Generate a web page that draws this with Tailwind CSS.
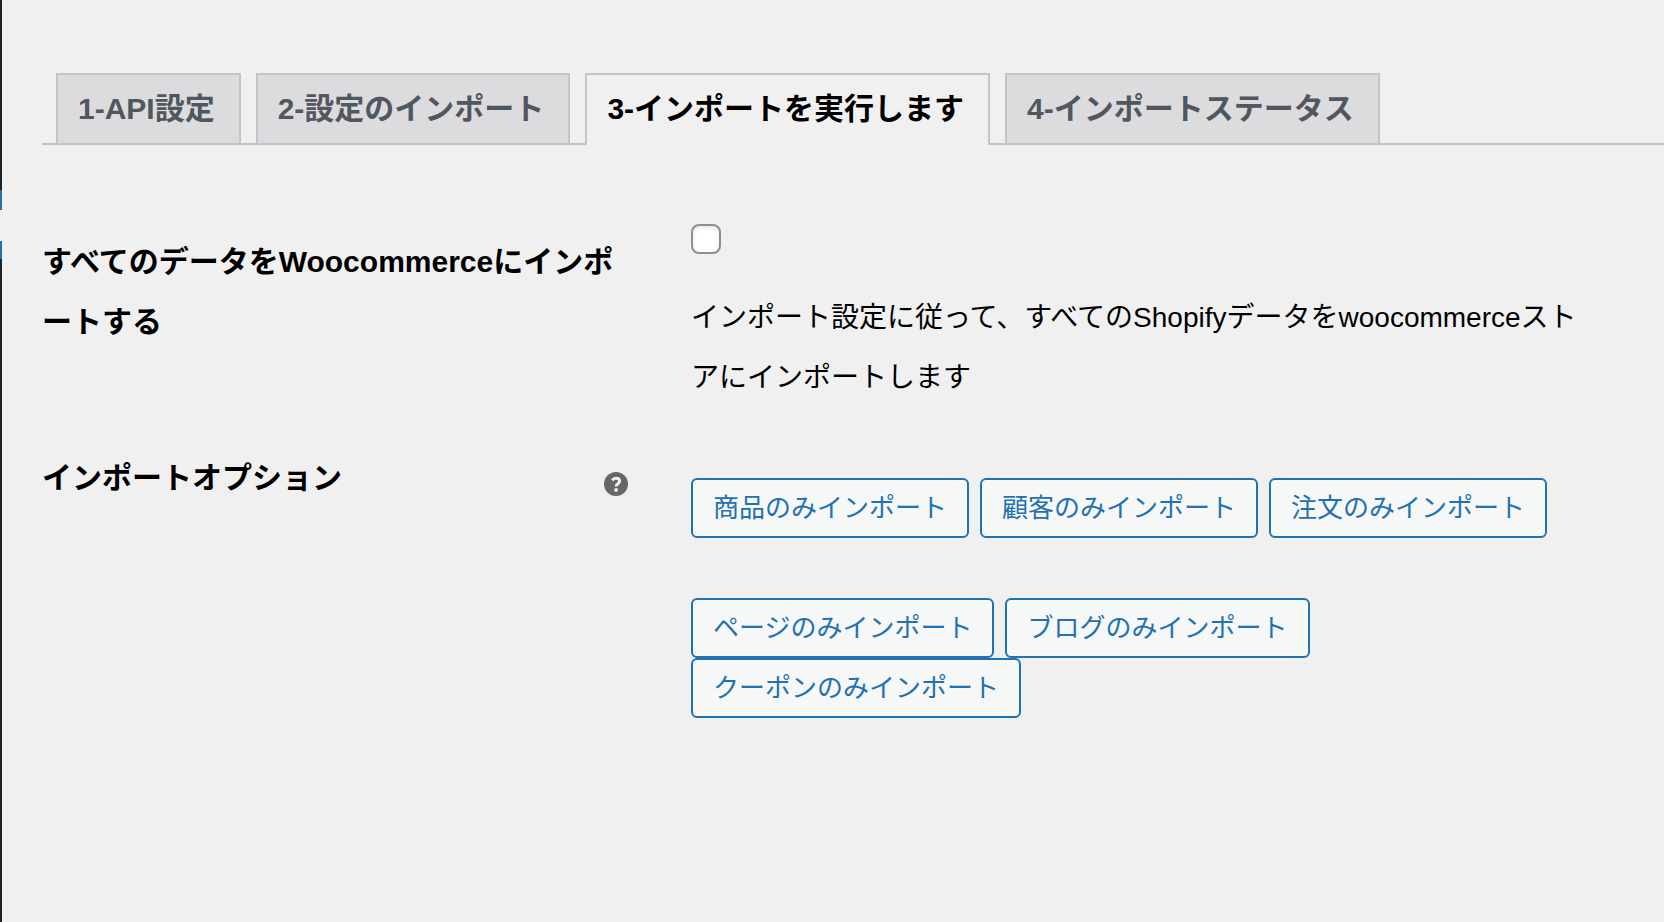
<!DOCTYPE html>
<html lang="ja">
<head>
  <meta charset="UTF-8" />
  <meta name="viewport" content="width=device-width, initial-scale=1.0" />
  <title>インポートを実行します</title>
  <script src="https://cdn.jsdelivr.net/npm/@tailwindcss/browser@4"></script>
</head>
<body class="flex min-h-screen bg-[#f0f0f0] text-black font-['Liberation_Sans','Noto_Sans_CJK_JP',sans-serif]">
  <!-- Edge of the admin menu -->
  <aside class="w-[2px] shrink-0 flex flex-col bg-[#1d2327]">
    <div class="mt-[190px] h-5 bg-[#2271b1]"></div>
    <div class="h-[31px] bg-[#f0f0f0]"></div>
    <div class="h-[18px] bg-[#2271b1]"></div>
  </aside>

  <main class="flex-1 min-w-0 pt-[73px] pl-10">
    <!-- Tabs -->
    <nav class="flex gap-[15px] pl-[14px] border-b-2 border-[#c3c4c7] text-[30px] leading-[68px] font-bold text-[#50575e] whitespace-nowrap">
      <a href="#api" class="pl-5 pr-6 border-2 border-b-0 border-[#c3c4c7] bg-[#dcdcde]">1-API設定</a>
      <a href="#settings" class="pl-5 pr-6 border-2 border-b-0 border-[#c3c4c7] bg-[#dcdcde]">2-設定のインポート</a>
      <a href="#import" aria-current="page" class="-mb-[2px] pl-5 pr-6 border-2 border-b-0 border-[#c3c4c7] bg-[#f0f0f0] text-black">3-インポートを実行します</a>
      <a href="#status" class="pl-5 pr-6 border-2 border-b-0 border-[#c3c4c7] bg-[#dcdcde]">4-インポートステータス</a>
    </nav>

    <form class="grid grid-cols-[586px_1fr] gap-x-[63px] gap-y-10 pt-[79px] pr-16">
      <label for="importAll" class="pt-2 text-[30px] leading-[60px] font-bold break-all [line-break:anywhere]">すべてのデータをWoocommerceにインポートする</label>
      <div>
        <input type="checkbox" id="importAll" aria-describedby="importAllHelp" class="block size-[30px] appearance-none rounded-lg border-2 border-[#8c8f94] bg-white shadow-[inset_0_2px_4px_rgba(0,0,0,0.1)] checked:bg-[#2271b1]" />
        <p id="importAllHelp" class="mt-[34px] text-[28px] leading-[60px] break-all">インポート設定に従って、すべてのShopifyデータをwoocommerceストアにインポートします</p>
      </div>

      <div class="flex items-start justify-between">
        <h2 class="text-[30px] leading-[60px] font-bold">インポートオプション</h2>
        <svg class="mt-6 size-6" viewBox="0 0 24 24" role="img" aria-label="ヘルプ">
          <circle cx="12" cy="12" r="12" fill="#666" />
          <path d="M8.2 8.3C9.2 6.9 10.4 6.3 12 6.3c2.2 0 3.6 1.1 3.6 2.8 0 2.7-3.4 2.5-3.4 5.3" fill="none" stroke="#f0f0f0" stroke-width="3" />
          <circle cx="12.1" cy="18" r="1.9" fill="#f0f0f0" />
        </svg>
      </div>
      <div class="pt-[30px] text-[26px] leading-[56px] text-[#2271b1] whitespace-nowrap">
        <div class="flex flex-wrap gap-x-[11px] mb-[60px]">
          <button type="button" class="px-5 rounded-md border-2 border-[#2271b1] bg-[#f6f7f7]">商品のみインポート</button>
          <button type="button" class="px-5 rounded-md border-2 border-[#2271b1] bg-[#f6f7f7]">顧客のみインポート</button>
          <button type="button" class="px-5 rounded-md border-2 border-[#2271b1] bg-[#f6f7f7]">注文のみインポート</button>
        </div>
        <div class="flex flex-wrap gap-x-[11px]">
          <button type="button" class="px-5 rounded-md border-2 border-[#2271b1] bg-[#f6f7f7]">ページのみインポート</button>
          <button type="button" class="px-5 rounded-md border-2 border-[#2271b1] bg-[#f6f7f7]">ブログのみインポート</button>
          <button type="button" class="px-5 rounded-md border-2 border-[#2271b1] bg-[#f6f7f7]">クーポンのみインポート</button>
        </div>
      </div>
    </form>
  </main>
</body>
</html>
